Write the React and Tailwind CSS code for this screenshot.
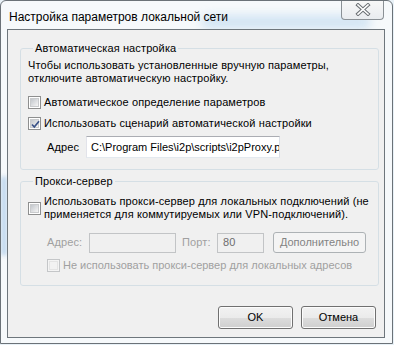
import React from 'react'

function Check({ checked, disabled }) {
  return (
    <span className={`relative flex h-[13px] w-[13px] shrink-0 items-center justify-center border ${disabled ? 'border-[#c4c6c8] bg-[#f4f4f4]' : 'border-[#8e8f8f] bg-white'}`}>
      <span className={`h-[9px] w-[9px] border ${disabled ? 'border-[#e4e4e4] bg-[#f2f2f2]' : 'border-[#c9cbcd] bg-gradient-to-br from-[#c3c7cc] to-[#f5f5f5]'}`} />
      {checked && (
        <svg className="absolute left-[1px] top-[1px]" width="11" height="11" viewBox="0 0 11 11">
          <path d="M2 5.5 L4.3 8 L9 2.2" fill="none" stroke="#3a5288" strokeWidth="1.7" />
        </svg>
      )}
    </span>
  )
}

function WinButton({ children, disabled, className = '' }) {
  return (
    <div className={`flex items-center justify-center whitespace-nowrap rounded-[3px] border tracking-normal ${disabled
      ? 'border-[#adb2b5] bg-[#f4f4f4] text-[#838383]'
      : 'border-[#707070] bg-[linear-gradient(#f2f2f2_0%,#ebebeb_50%,#dddddd_50%,#cfcfcf_100%)] text-black shadow-[inset_0_0_0_1px_#fcfcfc]'} ${className}`}>
      {children}
    </div>
  )
}

export default function App() {
  return (
    <div className="relative h-[345px] w-[394px] overflow-hidden bg-[#e8f1f7] font-['Liberation_Sans',Arial,sans-serif] text-[11px] leading-[13px] text-black">
      <div className="relative flex h-[344px] w-[393px] flex-col overflow-hidden rounded-t-[6px] border border-[#6b7278] bg-[#f6f9fb] pb-[5px] pl-[6px] pr-[7px]">
        {/* aero glass smudges */}
        <div className="absolute left-[200px] top-[14px] h-[14px] w-[170px] rounded-full bg-[#bcd8ef] opacity-60 blur-[5px]" />
        <div className="absolute left-[0px] top-[175px] h-[80px] w-[6px] rounded-full bg-[#a9c9e8] opacity-70 blur-[2px]" />

        <div className="relative flex h-[28px] shrink-0 items-start justify-between">
          <span className="pl-[2px] pt-[9px] text-[12px] leading-[14px]">Настройка параметров локальной сети</span>
          <div className="-mt-[1px] mr-[1px] flex h-[20px] w-[43px] items-center justify-center rounded-b-[4px] border border-t-0 border-[#8a9095] bg-[linear-gradient(#f8f8f8,#e9ecef)]">
            <svg width="16" height="13" viewBox="0 0 16 13">
              <path d="M3 2 L13 11 M13 2 L3 11" stroke="#6a6f73" strokeWidth="3.6" strokeLinecap="square" />
              <path d="M3 2 L13 11 M13 2 L3 11" stroke="#ffffff" strokeWidth="1.6" strokeLinecap="square" />
            </svg>
          </div>
        </div>

        <div className="relative flex flex-1 flex-col border border-[#6e767c] bg-[#f0f0f0] pl-[12px] pr-[5px] tracking-[0.12px]">
          <fieldset className="mt-[12px] rounded-[3px] border border-[#d5dfe5] pb-[11px] pl-[7px] pr-[7px]">
            <legend className="ml-[5px] px-[2px] leading-[13px]">Автоматическая настройка</legend>
            <p className="mt-[4px] whitespace-nowrap">Чтобы использовать установленные вручную параметры,<br />отключите автоматическую настройку.</p>
            <label className="mt-[11px] flex items-center gap-[3px]">
              <Check />
              <span>Автоматическое определение параметров</span>
            </label>
            <label className="mt-[8px] flex items-center gap-[3px]">
              <Check checked />
              <span>Использовать сценарий автоматической настройки</span>
            </label>
            <div className="mt-[6px] flex items-center">
              <span className="ml-[19px] w-[39px]">Адрес</span>
              <div className="flex h-[22px] w-[194px] items-center overflow-hidden whitespace-nowrap border border-[#abadb3] border-b-[#e3e9ef] border-l-[#e2e3ea] border-r-[#dbdfe6] bg-white pl-[4px] tracking-normal">
                C:\Program Files\i2p\scripts\i2pProxy.pac
              </div>
            </div>
          </fieldset>

          <fieldset className="mt-[5px] rounded-[3px] border border-[#d5dfe5] pb-[13px] pl-[7px] pr-[7px]">
            <legend className="ml-[5px] px-[2px] leading-[13px]">Прокси-сервер</legend>
            <label className="mt-[7px] flex items-center gap-[3px]">
              <Check />
              <span className="whitespace-nowrap">Использовать прокси-сервер для локальных подключений (не<br />применяется для коммутируемых или VPN-подключений).</span>
            </label>
            <div className="mt-[11px] flex items-center text-[#a0a0a0]">
              <span className="ml-[19px] w-[42px]">Адрес:</span>
              <div className="h-[20px] w-[87px] border border-[#c2c4c6] bg-[#f0f0f0]" />
              <span className="ml-[6px] w-[35px]">Порт:</span>
              <div className="flex h-[20px] w-[47px] items-center border border-[#c2c4c6] bg-[#f0f0f0] pl-[5px] text-[#6d6d6d]">80</div>
              <WinButton disabled className="ml-[9px] h-[21px] w-[93px]">Дополнительно</WinButton>
            </div>
            <label className="mt-[6px] flex items-center gap-[3px] text-[#a0a0a0]">
              <span className="ml-[19px]"><Check disabled /></span>
              <span className="whitespace-nowrap tracking-normal">Не использовать прокси-сервер для локальных адресов</span>
            </label>
          </fieldset>

          <div className="mt-auto flex justify-end gap-[8px] pb-[8px] pr-[3px]">
            <WinButton className="h-[23px] w-[75px]">OK</WinButton>
            <WinButton className="h-[23px] w-[75px]">Отмена</WinButton>
          </div>
        </div>
      </div>
    </div>
  )
}
